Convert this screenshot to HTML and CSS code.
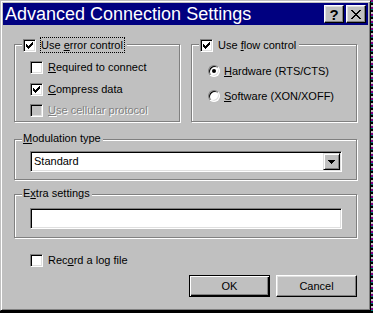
FILE: index.html
```html
<!DOCTYPE html>
<html>
<head>
<meta charset="utf-8">
<title>Advanced Connection Settings</title>
<link rel="stylesheet" href="styles.css">
</head>
<body>
<div class="window">
  <div class="titlebar">
    <span class="title">Advanced Connection Settings</span>
    <div class="caption-btns">
      <span class="cbtn help">?</span>
      <span class="cbtn close"><svg width="10" height="9" viewBox="0 0 10 9" shape-rendering="crispEdges"><path d="M0 0h2v1h1v1h1v1h2V2h1V1h1V0h2v1H9v1H8v1H7v1H6v1h1v1h1v1h1v1h1v1H8V8H7V7H6V6H4v1H3v1H2v1H0V8h1V7h1V6h1V5h1V4H3V3H2V2H1V1H0z" fill="#000"/></svg></span>
    </div>
  </div>
  <div class="content">
    <div class="top-row">
      <div class="group g-top g-error">
        <div class="legend">
          <span class="chk"><svg width="11" height="11" viewBox="1 1 11 11" shape-rendering="crispEdges"><path d="M9 3h1v1H9zM8 4h2v1H8zM3 5h1v1H3zM7 5h3v1H7zM3 6h2v1H3zM6 6h3v1H6zM3 7h5v1H3zM4 8h3v1H4zM5 9h1v1H5z" fill="#000"/></svg></span>
          <span class="focus">Use <u>e</u>rror control</span>
        </div>
        <div class="item"><span class="chk"></span><span><u>R</u>equired to connect</span></div>
        <div class="item"><span class="chk"><svg width="11" height="11" viewBox="1 1 11 11" shape-rendering="crispEdges"><path d="M9 3h1v1H9zM8 4h2v1H8zM3 5h1v1H3zM7 5h3v1H7zM3 6h2v1H3zM6 6h3v1H6zM3 7h5v1H3zM4 8h3v1H4zM5 9h1v1H5z" fill="#000"/></svg></span><span><u>C</u>ompress data</span></div>
        <div class="item disabled"><span class="chk chk-off"></span><span><u>U</u>se cellular protocol</span></div>
      </div>
      <div class="group g-top g-flow">
        <div class="legend">
          <span class="chk"><svg width="11" height="11" viewBox="1 1 11 11" shape-rendering="crispEdges"><path d="M9 3h1v1H9zM8 4h2v1H8zM3 5h1v1H3zM7 5h3v1H7zM3 6h2v1H3zM6 6h3v1H6zM3 7h5v1H3zM4 8h3v1H4zM5 9h1v1H5z" fill="#000"/></svg></span>
          <span class="nofocus">Use <u>f</u>low control</span>
        </div>
        <div class="item ritem"><span class="radio on"></span><span><u>H</u>ardware (RTS/CTS)</span></div>
        <div class="item ritem"><span class="radio"></span><span><u>S</u>oftware (XON/XOFF)</span></div>
      </div>
    </div>
    <div class="group g-mod">
      <div class="legend text-legend"><span><u>M</u>odulation type</span></div>
      <div class="field combo">
        <span class="combo-text">Standard</span>
        <span class="dd-btn"><svg width="7" height="4" viewBox="0 0 7 4" shape-rendering="crispEdges"><path d="M0 0h7v1H0zM1 1h5v1H1zM2 2h3v1H2zM3 3h1v1H3z" fill="#000"/></svg></span>
      </div>
    </div>
    <div class="group g-extra">
      <div class="legend text-legend"><span>E<u>x</u>tra settings</span></div>
      <div class="field"></div>
    </div>
    <div class="item log-row"><span class="chk"></span><span>Rec<u>o</u>rd a log file</span></div>
    <div class="btn-row">
      <span class="btn btn-default">OK</span>
      <span class="btn">Cancel</span>
    </div>
  </div>
</div>
</body>
</html>
```

FILE: styles.css
```css
html, body {
  margin: 0;
  padding: 0;
}
body {
  width: 373px;
  height: 313px;
  overflow: hidden;
  background: repeating-linear-gradient(180deg, #800080 0 2px, #008080 2px 3px, #000 3px 5px, #c0c0c0 5px 7px);
  font-family: "Liberation Sans", Arial, sans-serif;
  font-size: 11px;
  color: #000;
}
u {
  text-decoration: underline;
  text-underline-offset: 1px;
}
.window {
  box-sizing: border-box;
  width: 371px;
  height: 311px;
  background: #c0c0c0;
  border: 1px solid;
  border-color: #c0c0c0 #000 #000 #c0c0c0;
  box-shadow: inset 1px 1px #fff, inset -1px -1px #808080;
  padding: 2px;
  display: flex;
  flex-direction: column;
}
.titlebar {
  height: 22px;
  flex: none;
  background: #000080;
  color: #fff;
  display: flex;
  align-items: center;
  padding-left: 2px;
}
.title {
  font-size: 18px;
  line-height: 22px;
  white-space: nowrap;
}
.caption-btns {
  margin-left: auto;
  margin-right: 2px;
  display: flex;
  gap: 2px;
}
.cbtn {
  box-sizing: border-box;
  width: 20px;
  height: 18px;
  background: #c0c0c0;
  border: 1px solid;
  border-color: #fff #000 #000 #fff;
  box-shadow: inset -1px -1px #808080, inset 1px 1px #dfdfdf;
  display: flex;
  align-items: center;
  justify-content: center;
  color: #000;
}
.help {
  font-weight: bold;
  font-size: 15px;
  line-height: 1;
}
.cbtn svg {
  display: block;
}
.content {
  padding: 19px 11px 0 11px;
  display: flex;
  flex-direction: column;
}
.top-row {
  display: flex;
  gap: 11px;
}
.group {
  position: relative;
  box-sizing: border-box;
  border: 1px solid #808080;
  box-shadow: inset 1px 1px #fff, 1px 1px #fff;
}
.g-top {
  width: 166px;
  height: 78px;
  display: flex;
  flex-direction: column;
}
.g-error {
  padding: 16px 0 0 15px;
  gap: 8.5px;
}
.g-flow {
  padding: 20px 0 0 16px;
  gap: 13px;
}
.legend {
  position: absolute;
  left: 7px;
  top: -8px;
  height: 16px;
  background: #c0c0c0;
  display: flex;
  align-items: center;
  gap: 4px;
  padding: 0 2px 0 1px;
  white-space: nowrap;
}
.text-legend {
  height: 13px;
  line-height: 13px;
  padding: 0 2px 0 1px;
}
.focus {
  border: 1px dotted #000;
  line-height: 14px;
  padding: 0 1px 0 0;
}
.nofocus {
  border: 1px solid transparent;
  line-height: 14px;
}
.item {
  display: flex;
  align-items: center;
  gap: 5px;
  height: 13px;
  line-height: 13px;
  white-space: nowrap;
}
.ritem {
  height: 12px;
  gap: 4px;
}
.chk {
  box-sizing: border-box;
  width: 13px;
  height: 13px;
  flex: none;
  background: #fff;
  border: 1px solid;
  border-color: #808080 #fff #fff #808080;
  box-shadow: inset 1px 1px #000, inset -1px -1px #dfdfdf;
}
.chk svg {
  display: block;
}
.chk-off {
  background: #c0c0c0;
}
.disabled {
  color: #808080;
  text-shadow: 1px 1px 0 #fff;
}
.radio {
  box-sizing: border-box;
  width: 12px;
  height: 12px;
  flex: none;
  border-radius: 50%;
  background: #fff;
  border: 1px solid;
  border-color: #808080 #fff #fff #808080;
  box-shadow: inset 1px 1px #000, inset -1px -1px #dfdfdf;
  display: flex;
  align-items: center;
  justify-content: center;
}
.radio.on::after {
  content: "";
  width: 4px;
  height: 4px;
  border-radius: 50%;
  background: #000;
}
.g-mod {
  margin-top: 17px;
  padding: 11px 0 7px 15px;
}
.g-extra {
  margin-top: 14px;
  padding: 13px 0 8px 15px;
}
.field {
  box-sizing: border-box;
  width: 312px;
  height: 21px;
  background: #fff;
  border: 1px solid;
  border-color: #808080 #fff #fff #808080;
  box-shadow: inset 1px 1px #000, inset -1px -1px #dfdfdf;
  padding: 1px;
}
.combo {
  display: flex;
  align-items: center;
}
.combo-text {
  flex: 1;
  padding-left: 2px;
  line-height: 17px;
}
.dd-btn {
  box-sizing: border-box;
  width: 17px;
  height: 17px;
  flex: none;
  background: #c0c0c0;
  border: 1px solid;
  border-color: #dfdfdf #000 #000 #dfdfdf;
  box-shadow: inset 1px 1px #fff, inset -1px -1px #808080;
  display: flex;
  align-items: center;
  justify-content: center;
}
.dd-btn svg {
  display: block;
}
.log-row {
  margin-top: 16px;
  padding-left: 16px;
}
.btn-row {
  margin-top: 8px;
  display: flex;
  justify-content: flex-end;
  gap: 6px;
}
.btn {
  box-sizing: border-box;
  width: 81px;
  height: 22px;
  background: #c0c0c0;
  border: 1px solid;
  border-color: #fff #000 #000 #fff;
  box-shadow: inset -1px -1px #808080, inset 1px 1px #dfdfdf;
  display: flex;
  align-items: center;
  justify-content: center;
  line-height: 13px;
}
.btn-default {
  border-color: #000;
  box-shadow: inset 1px 1px #fff, inset -1px -1px #000, inset -2px -2px #808080;
}
```
